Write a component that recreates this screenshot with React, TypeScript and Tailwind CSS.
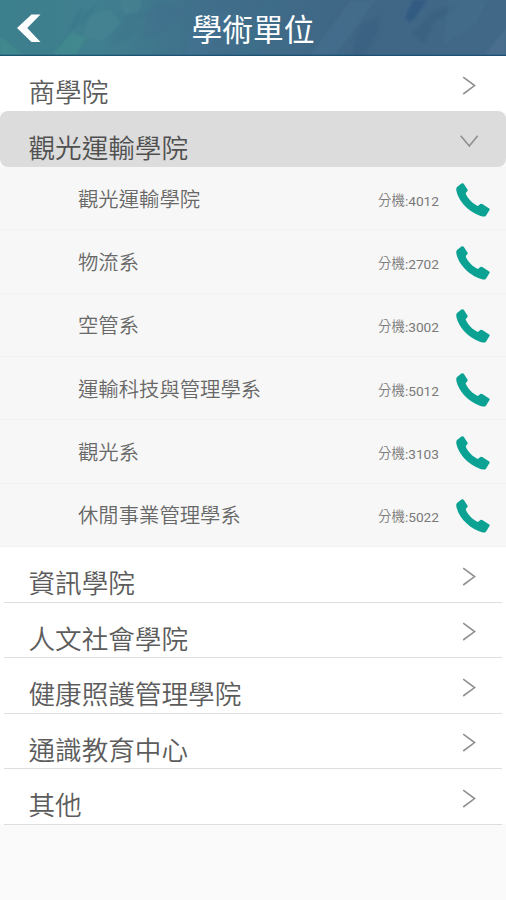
import { useState } from "react";

interface Department {
  name: string;
  ext: string;
}

interface College {
  name: string;
  departments: Department[];
}

const colleges: College[] = [
  { name: "商學院", departments: [] },
  {
    name: "觀光運輸學院",
    departments: [
      { name: "觀光運輸學院", ext: "4012" },
      { name: "物流系", ext: "2702" },
      { name: "空管系", ext: "3002" },
      { name: "運輸科技與管理學系", ext: "5012" },
      { name: "觀光系", ext: "3103" },
      { name: "休閒事業管理學系", ext: "5022" },
    ],
  },
  { name: "資訊學院", departments: [] },
  { name: "人文社會學院", departments: [] },
  { name: "健康照護管理學院", departments: [] },
  { name: "通識教育中心", departments: [] },
  { name: "其他", departments: [] },
];

function HeaderTexture() {
  return (
    <svg
      className="absolute inset-0 h-full w-full"
      viewBox="0 0 506 56"
      preserveAspectRatio="none"
    >
      <defs>
        <linearGradient id="sea" x1="0" x2="1" y1="0" y2="0">
          <stop offset="0" stopColor="#3c7f8d" />
          <stop offset="0.2" stopColor="#407f8f" />
          <stop offset="0.4" stopColor="#406f8b" />
          <stop offset="0.7" stopColor="#3f6685" />
          <stop offset="1" stopColor="#426888" />
        </linearGradient>
        <filter id="soft">
          <feGaussianBlur stdDeviation="1.2" />
        </filter>
      </defs>
      <rect width="506" height="56" fill="url(#sea)" />
      <g filter="url(#soft)">
        <path d="M0 36L24 56H0z M52 56l20-24 14 6-10 18z" fill="#45978f" opacity=".4" />
        <path d="M76 14l8-6-5 15-12 13z M100 2l-12 18-8 6 4-12z" fill="#33718a" opacity=".35" />
        <path d="M88 16l22-6 12 14-20 16-18-2z M120 0h22l-4 12-14 2z" fill="#4a8794" opacity=".4" />
        <path d="M110 38l16-22 18-6-14 26-20 12z" fill="#376c86" opacity=".25" />
        <path d="M146 12l14-8 26 6-20 20-24 10z" fill="#3f6b8c" opacity=".3" />
        <path d="M184 56l10-28 20-16 24 2-24 24-8 18z" fill="#48759a" opacity=".25" />
        <path d="M236 56l16-30 14-26h14l-10 34-14 22z" fill="#36738a" opacity=".3" />
        <path d="M310 56l22-30 18-26h26l-22 30-20 26z" fill="#4c7290" opacity=".4" />
        <path d="M352 56l8-30 20-10-4 20-12 20z" fill="#365c7c" opacity=".35" />
        <path d="M405 18l8-18h14l-12 18-6 4z" fill="#285581" opacity=".65" />
        <path d="M412 34l20-22 28-10-6 8-20 12-10 22z" fill="#365d7d" opacity=".5" />
        <path d="M448 0h40l-14 26-30 18z" fill="#47708b" opacity=".4" />
        <path d="M484 56l22-28v28z" fill="#547895" opacity=".4" />
      </g>
      <rect y="54.7" width="506" height="1.3" fill="#174e70" opacity=".85" />
    </svg>
  );
}

function Chevron({ open }: { open: boolean }) {
  return (
    <svg width="20" height="20" viewBox="0 0 20 20" fill="none" stroke="#909090" strokeWidth="1.6">
      {open ? <path d="M1.7 4.7l8.6 10.3L18.7 4.7" /> : <path d="M4.2 1.2L15.6 9.6 4.2 18" />}
    </svg>
  );
}

function PhoneIcon() {
  return (
    <svg width="34" height="34" viewBox="0 0 34 34" fill="#0ba294">
      <path d="M1 4L5.4.5Q7-.4 7.9.9L11.6 6.7Q12 7.6 11.1 8.4 9.7 9.4 9.8 10.8C11.5 15.4 16.8 20.9 22 23.1Q23 21.6 24.4 20.9 25.3 20.5 26.3 21.1L33.2 25.4Q34.1 26.1 33.5 27.1L30.1 32.4Q29 34 26.9 33.5C14.5 30.5 2.5 19 .3 7.2Q0 5.2 1 4z" />
    </svg>
  );
}

function DepartmentRow({ name, ext }: Department) {
  return (
    <div className="flex h-[63.33px] items-center border-b border-[#f2f2f2] bg-[#f7f7f7] pl-[78px] pr-4">
      <span className="mt-[3px] flex-1 text-[20.35px] leading-7 text-[#686868]">{name}</span>
      <span className="mr-[17px] mt-[5px] flex items-center text-[13.7px] leading-5 text-[#7a7a7a]">
        <span className="text-[13.4px]">分機</span>
        <span className="font-normal">:{ext}</span>
      </span>
      <a href={`tel:${ext}`} className="mt-[3px]">
        <PhoneIcon />
      </a>
    </div>
  );
}

export default function App() {
  const [openIndex, setOpenIndex] = useState(1);

  return (
    <div className="h-[900px] w-full overflow-hidden bg-[#fafafa] font-[Roboto,'Noto_Sans_CJK_TC',sans-serif] font-[350]">
      {/* Title bar */}
      <header className="relative h-14 overflow-hidden">
        <HeaderTexture />
        <div className="relative grid h-full grid-cols-[1fr_auto_1fr] items-center">
          <button className="w-fit pl-4">
            <svg width="26" height="30" viewBox="0 0 26 30" fill="#fff">
              <path d="M15.5 1.5H24.5L11.2 15 24.5 29H15.5L1 15z" />
            </svg>
          </button>
          <h1 className="mt-1.5 text-[30.8px] leading-10 font-normal text-white">學術單位</h1>
        </div>
      </header>

      {colleges.map((college, i) => {
        const open = i === openIndex;
        return (
          <section key={college.name}>
            <div
              onClick={() => setOpenIndex(open ? -1 : i)}
              className={`flex cursor-pointer justify-between pl-[28.5px] pr-[27px] ${
                open ? "-mt-[0.5px] h-14 rounded-lg bg-[#dcdcdc]" : "h-[55.5px] bg-white"
              }`}
            >
              <span
                className={`text-[26.6px] leading-9 ${
                  open ? "pt-5 text-[#505050]" : "pt-[19.3px] text-[#5c5c5c]"
                }`}
              >
                {college.name}
              </span>
              <div className="pt-5">
                <Chevron open={open} />
              </div>
            </div>
            {!open && i > openIndex && (
              <div className="relative mx-1 -my-[0.5px] h-px bg-[#dedede]" />
            )}
            {open && college.departments.map((d) => <DepartmentRow key={d.name} {...d} />)}
          </section>
        );
      })}
    </div>
  );
}
